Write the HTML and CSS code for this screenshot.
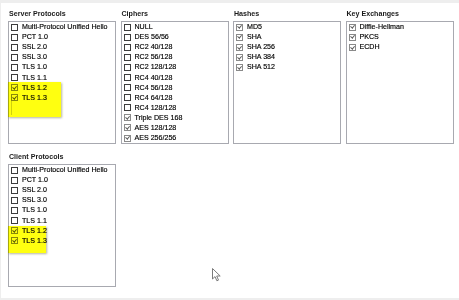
FILE: index.html
```html
<!DOCTYPE html>
<html>
<head>
<meta charset="utf-8">
<link rel="stylesheet" href="styles.css">
</head>
<body>
<div class="panel">
  <div class="top-grid">
    <section class="group">
      <div class="label">Server Protocols</div>
      <div class="box">
        <ul class="list">
          <li class="row"><span class="cb"></span>Multi-Protocol Unified Hello</li>
          <li class="row"><span class="cb"></span>PCT 1.0</li>
          <li class="row"><span class="cb"></span>SSL 2.0</li>
          <li class="row"><span class="cb"></span>SSL 3.0</li>
          <li class="row"><span class="cb"></span>TLS 1.0</li>
          <li class="row"><span class="cb"></span>TLS 1.1</li>
          <li class="row"><span class="cb on"></span>TLS 1.2</li>
          <li class="row"><span class="cb on"></span>TLS 1.3</li>
        </ul>
        <div class="hl hl-server"></div>
      </div>
    </section>
    <section class="group">
      <div class="label">Ciphers</div>
      <div class="box">
        <ul class="list">
          <li class="row"><span class="cb"></span>NULL</li>
          <li class="row"><span class="cb"></span>DES 56/56</li>
          <li class="row"><span class="cb"></span>RC2 40/128</li>
          <li class="row"><span class="cb"></span>RC2 56/128</li>
          <li class="row"><span class="cb"></span>RC2 128/128</li>
          <li class="row"><span class="cb"></span>RC4 40/128</li>
          <li class="row"><span class="cb"></span>RC4 56/128</li>
          <li class="row"><span class="cb"></span>RC4 64/128</li>
          <li class="row"><span class="cb"></span>RC4 128/128</li>
          <li class="row"><span class="cb on"></span>Triple DES 168</li>
          <li class="row"><span class="cb on"></span>AES 128/128</li>
          <li class="row"><span class="cb on"></span>AES 256/256</li>
        </ul>
      </div>
    </section>
    <section class="group">
      <div class="label">Hashes</div>
      <div class="box">
        <ul class="list">
          <li class="row"><span class="cb on"></span>MD5</li>
          <li class="row"><span class="cb on"></span>SHA</li>
          <li class="row"><span class="cb on"></span>SHA 256</li>
          <li class="row"><span class="cb on"></span>SHA 384</li>
          <li class="row"><span class="cb on"></span>SHA 512</li>
        </ul>
      </div>
    </section>
    <section class="group">
      <div class="label">Key Exchanges</div>
      <div class="box">
        <ul class="list">
          <li class="row"><span class="cb on"></span>Diffie-Hellman</li>
          <li class="row"><span class="cb on"></span>PKCS</li>
          <li class="row"><span class="cb on"></span>ECDH</li>
        </ul>
      </div>
    </section>
  </div>
  <section class="group client">
    <div class="label">Client Protocols</div>
    <div class="box">
      <ul class="list">
        <li class="row"><span class="cb"></span>Multi-Protocol Unified Hello</li>
        <li class="row"><span class="cb"></span>PCT 1.0</li>
        <li class="row"><span class="cb"></span>SSL 2.0</li>
        <li class="row"><span class="cb"></span>SSL 3.0</li>
        <li class="row"><span class="cb"></span>TLS 1.0</li>
        <li class="row"><span class="cb"></span>TLS 1.1</li>
        <li class="row"><span class="cb on"></span>TLS 1.2</li>
        <li class="row"><span class="cb on"></span>TLS 1.3</li>
      </ul>
      <div class="hl hl-client"></div>
    </div>
  </section>
  <svg class="cursor" width="10" height="15" viewBox="0 0 10 15">
    <path d="M0.5 0.5 L0.5 11 L3 8.6 L4.9 12.8 L6.5 12.1 L4.7 8 L8.2 8 Z" fill="#fff" stroke="#7a7a7a" stroke-width="1" stroke-linejoin="round"/>
  </svg>
</div>
</body>
</html>
```
FILE: styles.css
```css
html, body {
  margin: 0;
  padding: 0;
}
body {
  background: #eeeeee;
  font-family: "Liberation Sans", Arial, sans-serif;
  font-size: 7.1px;
  color: #000;
  width: 459px;
  height: 300px;
  overflow: hidden;
}
.panel {
  position: relative;
  margin: 3px 0 0 1px;
  width: 458px;
  height: 295px;
  background: #ffffff;
  padding: 6px 0 0 7px;
  box-sizing: border-box;
}
.top-grid {
  display: grid;
  grid-template-columns: repeat(4, 108px);
  column-gap: 4.5px;
}
.group {
  display: flex;
  flex-direction: column;
}
.client {
  width: 108px;
  margin-top: 8px;
}
.label {
  font-weight: bold;
  color: #1a1a1a;
  height: 10px;
  line-height: 10px;
  margin: 0 0 2px 1px;
  white-space: nowrap;
}
.box {
  position: relative;
  height: 123px;
  border: 1px solid #a8a9b0;
  box-sizing: border-box;
}
.list {
  list-style: none;
  margin: 0;
  padding: 0 0 0 2px;
}
.row {
  display: flex;
  align-items: center;
  height: 10.1px;
  white-space: nowrap;
  -webkit-text-stroke: 0.15px #000;
}
.cb {
  position: relative;
  flex: none;
  width: 7px;
  height: 7px;
  box-sizing: border-box;
  border: 1px solid #3c3c3c;
  background: #fff;
  margin-right: 4px;
}
.cb.on {
  border-color: #8a8a8a;
}
.cb.on::after {
  content: "";
  position: absolute;
  left: 1.4px;
  top: -0.2px;
  width: 1.6px;
  height: 3.4px;
  border: solid #5a5a5a;
  border-width: 0 1px 1px 0;
  transform: rotate(40deg);
}
.hl {
  position: absolute;
  background: #ffff10;
  mix-blend-mode: multiply;
  box-shadow: 1px 1px 2px rgba(90, 90, 40, 0.45);
}
.hl-server {
  left: -1px;
  top: 60px;
  width: 53px;
  height: 35px;
}
.hl-server::after {
  content: "";
  position: absolute;
  left: 3px;
  top: 19px;
  bottom: 2px;
  width: 1px;
  background: rgba(0, 0, 0, 0.18);
}
.hl-client {
  left: -1px;
  top: 61px;
  width: 38px;
  height: 27px;
}
.cursor {
  position: absolute;
  left: 211px;
  top: 265px;
}
```
